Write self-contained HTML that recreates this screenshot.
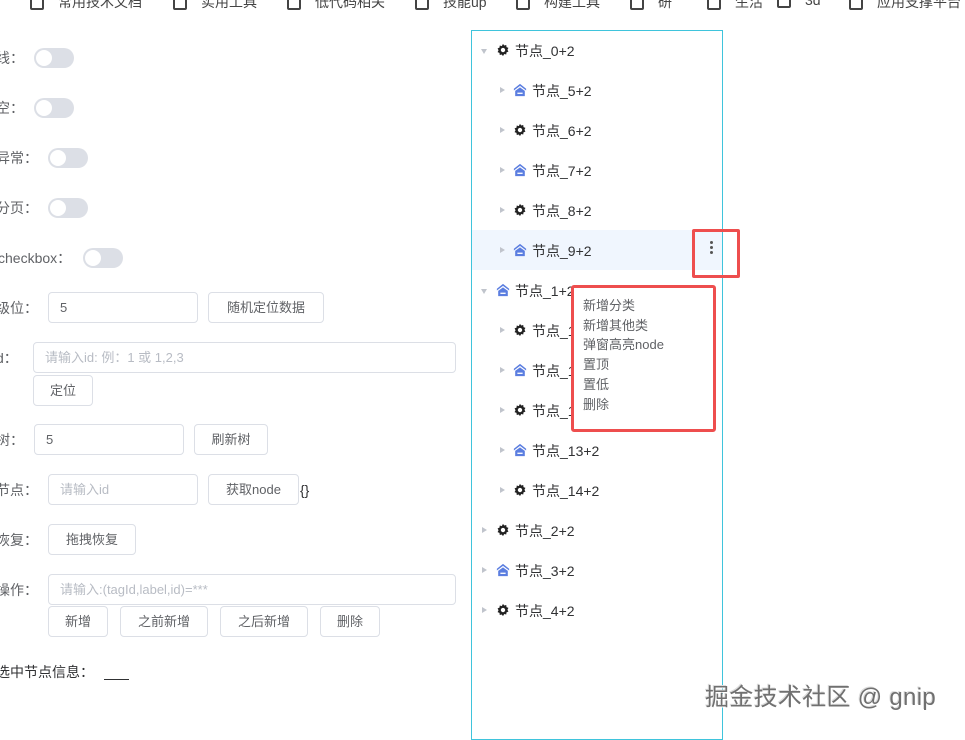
<!DOCTYPE html>
<html><head><meta charset="utf-8"><style>
*{box-sizing:border-box;margin:0;padding:0}
body{width:965px;height:731px;overflow:hidden;background:#fff;font-family:"Liberation Sans","Noto Sans CJK SC",sans-serif;color:#606266;font-size:14px;position:relative}
.a{position:absolute}
.lbl{position:absolute;font-size:14px;color:#606266;line-height:20px}
.tg{position:absolute;width:40px;height:20px;border-radius:10px;background:#dcdfe6}
.tg:after{content:"";position:absolute;left:2px;top:2px;width:16px;height:16px;border-radius:50%;background:#fff}
.in{position:absolute;border:1px solid #dcdfe6;border-radius:4px;height:31px;padding-left:11px;line-height:29px;font-size:13px;color:#606266}
.ph{color:#b8bcc4}
.bt{position:absolute;border:1px solid #dcdfe6;border-radius:4px;height:31px;line-height:29px;text-align:center;font-size:13px;color:#606266}
.row{position:absolute;left:472px;width:250px;height:40px;line-height:40px;font-size:14px;color:#303133}
.ar{position:absolute;top:17px;width:0;height:0;border-top:3.5px solid transparent;border-bottom:3.5px solid transparent;border-left:5px solid #c0c4cc}
.ar.d{border-left:3.5px solid transparent;border-right:3.5px solid transparent;border-top:5px solid #c0c4cc;border-bottom:0;top:19px}
.ic{position:absolute;top:13px;width:14px;height:14px}
.tx{position:absolute;top:1px}
.bm{position:absolute;top:-8px;font-size:14px;color:#444;white-space:nowrap}
.bm i{display:inline-block;width:14px;height:13px;border:2px solid #444;border-radius:2px;margin-right:14px;vertical-align:middle}
</style></head><body>
<div class="bm" style="left:30px"><i></i>常用技术文档</div>
<div class="bm" style="left:173px"><i></i>实用工具</div>
<div class="bm" style="left:287px"><i></i>低代码相关</div>
<div class="bm" style="left:415px"><i></i>技能up</div>
<div class="bm" style="left:516px"><i></i>构建工具</div>
<div class="bm" style="left:630px"><i></i>研</div>
<div class="bm" style="left:707px"><i></i>生活</div>
<div class="bm" style="left:777px"><i></i>3d</div>
<div class="bm" style="left:849px"><i></i>应用支撑平台</div>

<div class="lbl" style="left:-4px;top:48px">线：</div><div class="tg" style="left:34px;top:48px"></div>
<div class="lbl" style="left:-4px;top:98px">空：</div><div class="tg" style="left:34px;top:98px"></div>
<div class="lbl" style="left:-4px;top:148px">异常：</div><div class="tg" style="left:48px;top:148px"></div>
<div class="lbl" style="left:-4px;top:198px">分页：</div><div class="tg" style="left:48px;top:198px"></div>
<div class="lbl" style="left:-2px;top:248px">checkbox：</div><div class="tg" style="left:83px;top:248px"></div>

<div class="lbl" style="left:-4px;top:298px">级位：</div>
<div class="in" style="left:48px;top:292px;width:150px">5</div>
<div class="bt" style="left:208px;top:292px;width:116px">随机定位数据</div>
<div class="lbl" style="left:-4px;top:348px">d：</div>
<div class="in ph" style="left:33px;top:342px;width:423px">请输入id: 例：1 或 1,2,3</div>
<div class="bt" style="left:33px;top:375px;width:60px">定位</div>
<div class="lbl" style="left:-4px;top:430px">树：</div>
<div class="in" style="left:34px;top:424px;width:150px">5</div>
<div class="bt" style="left:194px;top:424px;width:74px">刷新树</div>
<div class="lbl" style="left:-4px;top:480px">节点：</div>
<div class="in ph" style="left:48px;top:474px;width:150px">请输入id</div>
<div class="bt" style="left:208px;top:474px;width:91px">获取node</div>
<div class="lbl" style="left:300px;top:480px;color:#303133">{}</div>
<div class="lbl" style="left:-4px;top:530px">恢复：</div>
<div class="bt" style="left:48px;top:524px;width:88px">拖拽恢复</div>
<div class="lbl" style="left:-4px;top:580px">操作：</div>
<div class="in ph" style="left:48px;top:574px;width:408px">请输入:(tagId,label,id)=***</div>
<div class="bt" style="left:48px;top:606px;width:60px">新增</div>
<div class="bt" style="left:120px;top:606px;width:88px">之前新增</div>
<div class="bt" style="left:220px;top:606px;width:88px">之后新增</div>
<div class="bt" style="left:320px;top:606px;width:60px">删除</div>
<div class="lbl" style="left:-4px;top:662px;color:#303133">选中节点信息：</div>
<div class="a" style="left:104px;top:679px;width:25px;height:1px;background:#303133"></div>

<div class="a" style="left:471px;top:30px;width:252px;height:710px;border:1px solid #3fc4dc"></div>
<div class="a" style="left:472px;top:230px;width:250px;height:40px;background:#f0f6fe"></div>

<svg width="0" height="0" style="position:absolute"><defs>
<symbol id="g" viewBox="0 0 16 16"><path fill="#222" d="M8 1l1.4 1.9 2.3-.6.3 2.4 2.2.9-1.1 2.1 1.1 2.1-2.2.9-.3 2.4-2.3-.6L8 15l-1.4-1.9-2.3.6-.3-2.4-2.2-.9L2.9 8.3 1.8 6.2 4 5.3l.3-2.4 2.3.6z"/><circle cx="8" cy="8" r="2.5" fill="#fff"/></symbol>
<symbol id="h" viewBox="0 0 16 16"><path fill="#5b7ee0" d="M8 1L1 6.5v2L8 3.3l7 5.2v-2z"/><path fill="#5b7ee0" d="M2.5 9L8 5l5.5 4v6h-11z"/><rect x="5" y="11" width="6" height="1.5" fill="#fff"/></symbol>
</defs></svg>

<div class="row" style="top:30px"><span class="ar d" style="left:9px"></span><svg class="ic" style="left:24px"><use href="#g"/></svg><span class="tx" style="left:43px">节点_0+2</span></div>
<div class="row" style="top:70px"><span class="ar" style="left:28px"></span><svg class="ic" style="left:41px"><use href="#h"/></svg><span class="tx" style="left:60px">节点_5+2</span></div>
<div class="row" style="top:110px"><span class="ar" style="left:28px"></span><svg class="ic" style="left:41px"><use href="#g"/></svg><span class="tx" style="left:60px">节点_6+2</span></div>
<div class="row" style="top:150px"><span class="ar" style="left:28px"></span><svg class="ic" style="left:41px"><use href="#h"/></svg><span class="tx" style="left:60px">节点_7+2</span></div>
<div class="row" style="top:190px"><span class="ar" style="left:28px"></span><svg class="ic" style="left:41px"><use href="#g"/></svg><span class="tx" style="left:60px">节点_8+2</span></div>
<div class="row" style="top:230px"><span class="ar" style="left:28px"></span><svg class="ic" style="left:41px"><use href="#h"/></svg><span class="tx" style="left:60px">节点_9+2</span></div>
<div class="row" style="top:270px"><span class="ar d" style="left:9px"></span><svg class="ic" style="left:24px"><use href="#h"/></svg><span class="tx" style="left:43px">节点_1+2</span></div>
<div class="row" style="top:310px"><span class="ar" style="left:28px"></span><svg class="ic" style="left:41px"><use href="#g"/></svg><span class="tx" style="left:60px">节点_10+2</span></div>
<div class="row" style="top:350px"><span class="ar" style="left:28px"></span><svg class="ic" style="left:41px"><use href="#h"/></svg><span class="tx" style="left:60px">节点_11+2</span></div>
<div class="row" style="top:390px"><span class="ar" style="left:28px"></span><svg class="ic" style="left:41px"><use href="#g"/></svg><span class="tx" style="left:60px">节点_12+2</span></div>
<div class="row" style="top:430px"><span class="ar" style="left:28px"></span><svg class="ic" style="left:41px"><use href="#h"/></svg><span class="tx" style="left:60px">节点_13+2</span></div>
<div class="row" style="top:470px"><span class="ar" style="left:28px"></span><svg class="ic" style="left:41px"><use href="#g"/></svg><span class="tx" style="left:60px">节点_14+2</span></div>
<div class="row" style="top:510px"><span class="ar" style="left:10px"></span><svg class="ic" style="left:24px"><use href="#g"/></svg><span class="tx" style="left:43px">节点_2+2</span></div>
<div class="row" style="top:550px"><span class="ar" style="left:10px"></span><svg class="ic" style="left:24px"><use href="#h"/></svg><span class="tx" style="left:43px">节点_3+2</span></div>
<div class="row" style="top:590px"><span class="ar" style="left:10px"></span><svg class="ic" style="left:24px"><use href="#g"/></svg><span class="tx" style="left:43px">节点_4+2</span></div>

<div class="a" style="left:710px;top:241px;width:3px;height:3px;border-radius:50%;background:#555"></div>
<div class="a" style="left:710px;top:246px;width:3px;height:3px;border-radius:50%;background:#555"></div>
<div class="a" style="left:710px;top:251px;width:3px;height:3px;border-radius:50%;background:#555"></div>
<div class="a" style="left:692px;top:229px;width:48px;height:49px;border:3.5px solid #ee4e4e;border-radius:2px"></div>

<div class="a" style="left:571px;top:285px;width:145px;height:147px;background:#fff;border:3.5px solid #ee4e4e;border-radius:3px;padding:8px 0 0 9px;font-size:13px;line-height:19.7px;color:#606266">新增分类<br>新增其他类<br>弹窗高亮node<br>置顶<br>置低<br>删除</div>

<div class="a" style="left:705px;top:677px;font-size:24px;color:#707070;text-shadow:1px 1px 0 #fff,-1px -1px 0 #ddd;white-space:nowrap;letter-spacing:0.3px">掘金技术社区 @ gnip</div>
</body></html>
